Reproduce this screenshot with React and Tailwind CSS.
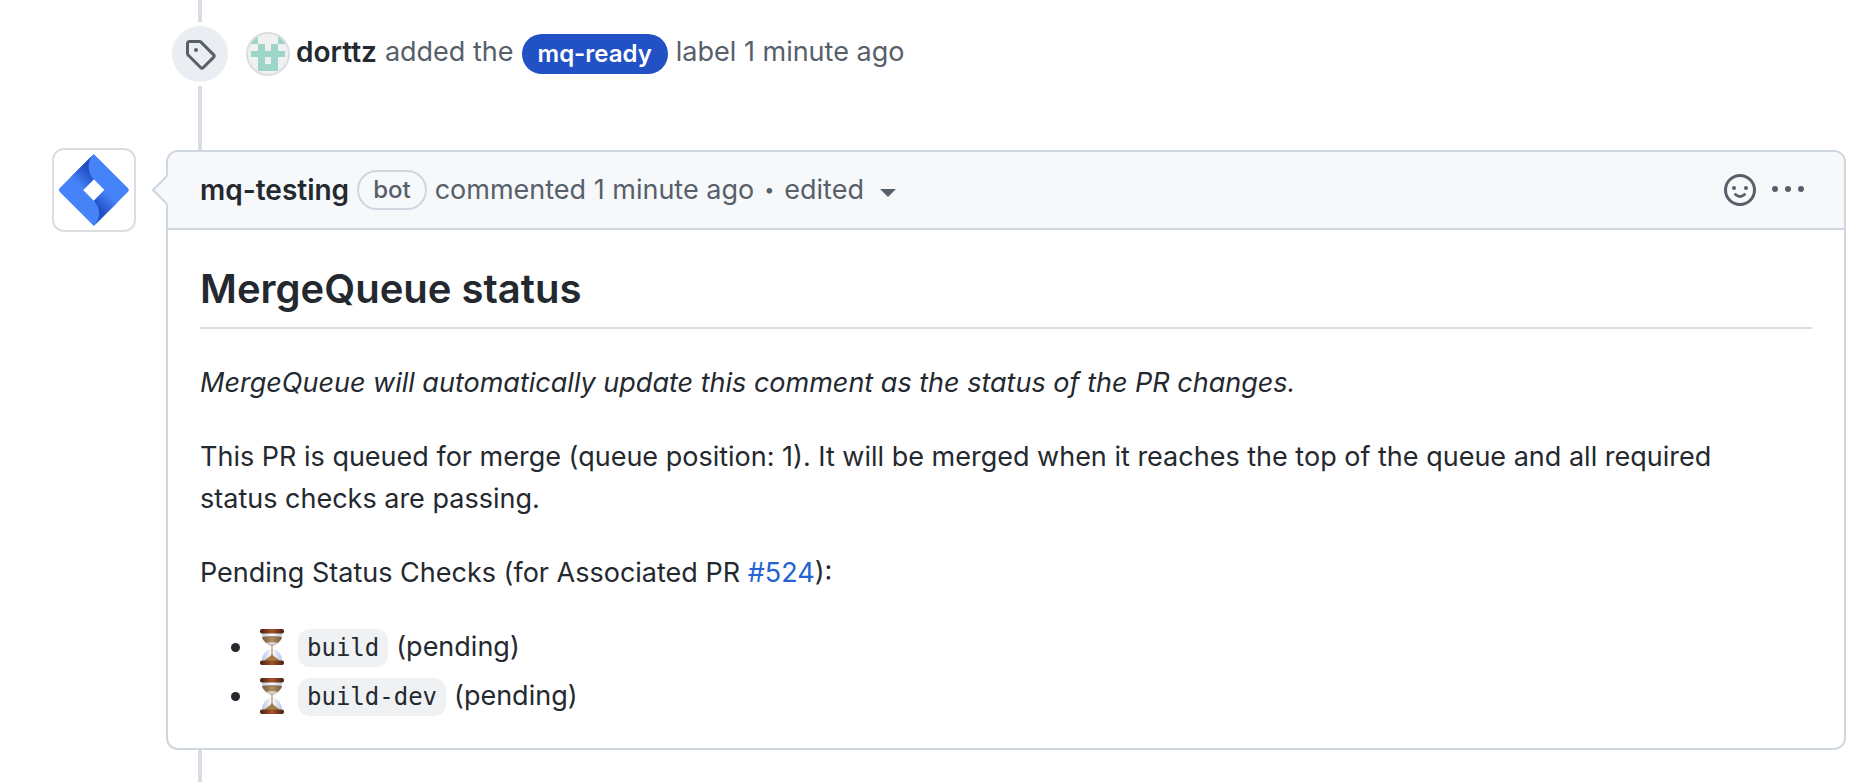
import React from 'react';

function TagIcon() {
  return (
    <svg viewBox="0 0 16 16" className="size-8 fill-[#57606a]" aria-hidden="true">
      <path d="M1 7.775V2.75C1 1.784 1.784 1 2.75 1h5.025c.464 0 .91.184 1.238.513l6.25 6.25a1.75 1.75 0 0 1 0 2.474l-5.026 5.026a1.75 1.75 0 0 1-2.474 0l-6.25-6.25A1.752 1.752 0 0 1 1 7.775Zm1.5 0c0 .066.026.13.073.177l6.25 6.25a.25.25 0 0 0 .354 0l5.025-5.025a.25.25 0 0 0 0-.354l-6.25-6.25a.25.25 0 0 0-.177-.073H2.75a.25.25 0 0 0-.25.25ZM6 5a1 1 0 1 1 0 2 1 1 0 0 1 0-2Z" />
    </svg>
  );
}

function Identicon() {
  return (
    <svg viewBox="0 0 44 44" className="size-11 shrink-0" aria-hidden="true">
      <defs>
        <clipPath id="identicon-clip"><circle cx="22" cy="22" r="20.5" /></clipPath>
      </defs>
      <circle cx="22" cy="22" r="21" fill="#f0f0f0" />
      <g clipPath="url(#identicon-clip)" fill="#9ed5c9">
        <path d="M5 5h7v7H5zM32 5h7v7h-7zM12 12h7v7h6v-7h7v7h7v6h-7v14H12V25H5v-6h7zM19 25v7h6v-7z" fillRule="evenodd" />
      </g>
      <circle cx="22" cy="22" r="21" fill="none" stroke="#dcdddf" strokeWidth="2" />
    </svg>
  );
}

function JiraLogo() {
  return (
    <svg viewBox="0 0 216.7 224" className="h-18" aria-hidden="true">
      <defs>
        <linearGradient id="jira-a" gradientUnits="userSpaceOnUse" x1="102.4" y1="45.4" x2="56.2" y2="91.6">
          <stop offset=".18" stopColor="#2150c4" />
          <stop offset="1" stopColor="#4683f8" />
        </linearGradient>
        <linearGradient id="jira-b" gradientUnits="userSpaceOnUse" x1="114.7" y1="178.2" x2="160.8" y2="132.1">
          <stop offset=".18" stopColor="#2150c4" />
          <stop offset="1" stopColor="#4683f8" />
        </linearGradient>
      </defs>
      <path fill="#4683f8" d="M214.06 105.73 117.67 9.34 108.33 0 35.77 72.56 2.59 105.73a8.89 8.89 0 0 0 0 12.54l66.29 66.29L108.33 224l72.55-72.56 1.13-1.12 32.05-32a8.87 8.87 0 0 0 0-12.59zm-105.73 39.39L75.21 112l33.12-33.12L141.44 112z" />
      <path fill="url(#jira-a)" d="M108.33 78.88a55.75 55.75 0 0 1-.24-78.61L35.62 72.71l39.44 39.44z" />
      <path fill="url(#jira-b)" d="m141.53 111.91-33.2 33.21a55.77 55.77 0 0 1 0 78.86L181 151.35z" />
    </svg>
  );
}

function SmileyIcon() {
  return (
    <svg viewBox="0 0 32 32" className="size-8" aria-hidden="true">
      <circle cx="16" cy="16" r="14.5" fill="none" stroke="#57606a" strokeWidth="3" />
      <circle cx="10" cy="14" r="2" fill="#57606a" />
      <circle cx="22" cy="14" r="2" fill="#57606a" />
      <path d="M11.5 20.5q4.5 4 9 0" fill="none" stroke="#57606a" strokeWidth="3" strokeLinecap="round" />
    </svg>
  );
}

function KebabIcon() {
  return (
    <svg viewBox="0 0 32 32" className="size-8 fill-[#57606a]" aria-hidden="true">
      <circle cx="3" cy="15" r="3" />
      <circle cx="16" cy="15" r="3" />
      <circle cx="29" cy="15" r="3" />
    </svg>
  );
}

function Hourglass() {
  return (
    <svg viewBox="0 0 24 36" className="mr-3.5 h-9 w-6 shrink-0" role="img" aria-label="pending">
      <defs>
        <linearGradient id="wood" x1="0" x2="1">
          <stop offset="0" stopColor="#4a1c0c" />
          <stop offset=".5" stopColor="#a5552c" />
          <stop offset="1" stopColor="#4a1c0c" />
        </linearGradient>
        <linearGradient id="sand" x1="0" x2="1">
          <stop offset="0" stopColor="#7a5a3c" />
          <stop offset=".5" stopColor="#b08d62" />
          <stop offset="1" stopColor="#7a5a3c" />
        </linearGradient>
        <linearGradient id="glass" x1="0" x2="1">
          <stop offset="0" stopColor="#b9c6e6" />
          <stop offset=".5" stopColor="#ffffff" />
          <stop offset="1" stopColor="#b9c6e6" />
        </linearGradient>
      </defs>
      <path fill="url(#glass)" d="M2 4h20c0 7-3 10-9 13v2c6 3 9 7 9 13H2c0-6 3-10 9-13v-2C5 14 2 11 2 4z" />
      <path fill="url(#sand)" d="M2 8q10-2 20 0c-1 4-4 6-9 9h-2C6 14 3 12 2 8z" />
      <path fill="#d4cdc6" d="M6 14q6-2 12 0c-1 1-3 2-5 3h-2c-2-1-4-2-5-3z" />
      <path fill="#a67a45" d="M12 25c2 3 5 4 8 7H4c3-3 6-4 8-7z" />
      <path stroke="#a67a45" strokeWidth="1" d="M12 16v10" />
      <rect x="0" y="0" width="24" height="4.5" rx="2" fill="url(#wood)" />
      <rect x="0" y="31.5" width="24" height="4.5" rx="2" fill="url(#wood)" />
    </svg>
  );
}

function Check({ name }) {
  return (
    <li className="flex h-[42px] items-center">
      <span className="mr-5 size-[9px] rounded-full bg-[#24292f]" />
      <Hourglass />
      <code className="mt-0.5 mr-2 rounded-xl bg-[#eff1f3] px-[9px] font-['DejaVu_Sans_Mono',monospace] text-[24px] leading-[38px]">{name}</code>
      <span>(pending)</span>
    </li>
  );
}

export default function App() {
  return (
    <main className="bg-white pr-[30px] font-['Inter',sans-serif] text-[27px] leading-[42px] text-[#24292f]">
      <div className="ml-[198px] h-[22px] w-1 bg-[#d8dee4]" />
      <div className="flex items-center py-1 pl-[172px] text-[#57606a]">
        <span className="mr-[18px] grid size-14 place-items-center rounded-full bg-[#eaeef2]">
          <TagIcon />
        </span>
        <Identicon />
        <p className="ml-1.5 flex items-center gap-2">
          <a href="#dorttz" className="pb-1 text-[28px] font-semibold text-[#24292f]">dorttz</a>
          <span className="pb-1">added the</span>
          <a href="#mq-ready" className="rounded-full bg-[#2151c5] px-4 text-[24px] leading-10 font-semibold text-white">mq-ready</a>
          <span className="pb-1">label 1 minute ago</span>
        </p>
      </div>
      <div className="ml-[198px] h-16 w-1 bg-[#d8dee4]" />
      <div className="flex items-start pl-[52px]">
        <a href="#mq-testing" aria-label="mq-testing" className="-mt-0.5 mr-[30px] grid size-[84px] shrink-0 place-items-center rounded-xl border-2 border-[#dcdddf]">
          <JiraLogo />
        </a>
        <article className="relative grow rounded-xl border-2 border-[#d0d7de]">
          <svg viewBox="0 0 16 32" className="absolute top-[22px] -left-4 h-8 w-4" aria-hidden="true">
            <path d="M16 1 1 16l15 15z" fill="#f6f8fa" />
            <path d="M15 2 1 16l14 14" fill="none" stroke="#d0d7de" strokeWidth="2" />
          </svg>
          <header className="flex h-[78px] items-center rounded-t-xl border-b-2 border-[#d0d7de] bg-[#f6f8fa] pr-10 pl-8 text-[#57606a]">
            <a href="#mq-testing" className="mr-2 text-[28px] font-semibold text-[#24292f]">mq-testing</a>
            <span className="mr-2 rounded-full border-2 border-[#d0d7de] px-3.5 text-[24px] leading-9 font-medium">bot</span>
            <span>commented 1 minute ago</span>
            <span className="mx-2.5 text-[18px]">•</span>
            <button className="flex items-center gap-4">
              edited
              <svg viewBox="0 0 16 8" className="mt-1.5 h-2 w-4 fill-[#57606a]" aria-hidden="true"><path d="M0 0h16L8 8z" /></svg>
            </button>
            <button aria-label="Add reaction" className="mr-4 ml-auto"><SmileyIcon /></button>
            <button aria-label="Show options"><KebabIcon /></button>
          </header>
          <div className="px-8 pt-8 pb-[31px]">
            <h2 className="border-b-2 border-[#d8dee4] pb-3 text-[40px] leading-[53px] font-semibold">MergeQueue status</h2>
            <p className="mt-[33px] italic">MergeQueue will automatically update this comment as the status of the PR changes.</p>
            <p className="mt-8 pr-8">This PR is queued for merge (queue position: 1). It will be merged when it reaches the top of the queue and all required status checks are passing.</p>
            <p className="mt-8">
              Pending Status Checks (for Associated PR <a href="#524" className="text-[#2563d4]">#524</a>):
            </p>
            <ul className="mt-8 flex flex-col gap-[7px] pl-[31px]">
              <Check name="build" />
              <Check name="build-dev" />
            </ul>
          </div>
        </article>
      </div>
      <div className="ml-[198px] h-8 w-1 bg-[#d8dee4]" />
    </main>
  );
}
